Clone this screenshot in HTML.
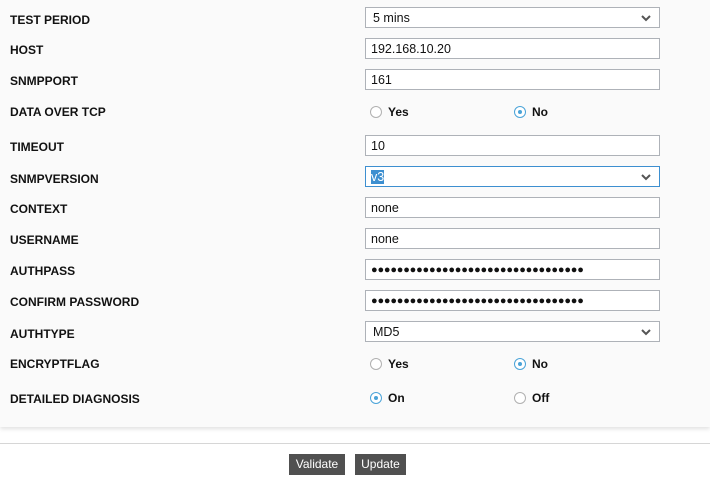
<!DOCTYPE html>
<html><head><meta charset="utf-8"><style>
*{margin:0;padding:0;box-sizing:border-box}
body{width:710px;height:478px;background:#fff;font-family:"Liberation Sans",sans-serif;position:relative;overflow:hidden}
.panel{position:absolute;left:0;top:0;width:710px;height:427px;background:#fafafa;box-shadow:0 2px 4px rgba(0,0,0,0.12)}
.l{position:absolute;left:10px;font-weight:bold;font-size:12px;color:#111;line-height:14px}
.f{position:absolute;left:365px;width:295px;height:21px;border:1px solid #aeb2b8;background:#fff;font-size:12.5px;color:#111;padding-left:5px;line-height:20px}
.f.s{padding-left:7px}
.f.focus{border-color:#3d8fd0}
.chev{position:absolute;right:7px;top:6px;width:12px;height:8px}
.r{position:absolute;font-size:12px;font-weight:bold;color:#111;line-height:14px}
.c{position:absolute;width:12px;height:12px;border:1px solid #b0b0b0;border-radius:50%;background:#fff}
.c.on{border-color:#4aa3d8}
.c.on::after{content:"";position:absolute;left:3px;top:3px;width:4px;height:4px;border-radius:50%;background:#4aa3d8}
.line{position:absolute;left:0;top:443px;width:710px;height:1px;background:#d6d6d6}
.b{position:absolute;top:454px;height:21px;background:#505050;color:#fff;font-size:12px;line-height:21px;text-align:center}
.dots{font-size:11px;letter-spacing:-0.2px}
</style></head><body>
<div class="panel"></div>

<div class="l" style="top:13px">TEST PERIOD</div>
<div class="l" style="top:43px">HOST</div>
<div class="l" style="top:74px">SNMPPORT</div>
<div class="l" style="top:105px">DATA OVER TCP</div>
<div class="l" style="top:140px">TIMEOUT</div>
<div class="l" style="top:172px">SNMPVERSION</div>
<div class="l" style="top:202px">CONTEXT</div>
<div class="l" style="top:233px">USERNAME</div>
<div class="l" style="top:264px">AUTHPASS</div>
<div class="l" style="top:295px">CONFIRM PASSWORD</div>
<div class="l" style="top:327px">AUTHTYPE</div>
<div class="l" style="top:357px">ENCRYPTFLAG</div>
<div class="l" style="top:392px">DETAILED DIAGNOSIS</div>

<div class="f s" style="top:7px">5 mins<svg class="chev" viewBox="0 0 12 8"><path d="M2 2 L6 6 L10 2" stroke="#555" stroke-width="2" fill="none"/></svg></div>
<div class="f" style="top:38px">192.168.10.20</div>
<div class="f" style="top:69px">161</div>

<div class="c" style="left:370px;top:106px"></div><div class="r" style="left:388px;top:105px">Yes</div>
<div class="c on" style="left:514px;top:106px"></div><div class="r" style="left:532px;top:105px">No</div>

<div class="f" style="top:135px">10</div>
<div class="f focus" style="top:166px"><span style="background:#3d8fd0;color:#fff">v3</span><svg class="chev" viewBox="0 0 12 8"><path d="M2 2 L6 6 L10 2" stroke="#555" stroke-width="2" fill="none"/></svg></div>
<div class="f" style="top:197px">none</div>
<div class="f" style="top:228px">none</div>
<div class="f dots" style="top:259px">●●●●●●●●●●●●●●●●●●●●●●●●●●●●●●●●●</div>
<div class="f dots" style="top:290px">●●●●●●●●●●●●●●●●●●●●●●●●●●●●●●●●●</div>
<div class="f s" style="top:321px">MD5<svg class="chev" viewBox="0 0 12 8"><path d="M2 2 L6 6 L10 2" stroke="#555" stroke-width="2" fill="none"/></svg></div>

<div class="c" style="left:370px;top:358px"></div><div class="r" style="left:388px;top:357px">Yes</div>
<div class="c on" style="left:514px;top:358px"></div><div class="r" style="left:532px;top:357px">No</div>

<div class="c on" style="left:370px;top:392px"></div><div class="r" style="left:388px;top:391px">On</div>
<div class="c" style="left:514px;top:392px"></div><div class="r" style="left:532px;top:391px">Off</div>

<div class="line"></div>
<div class="b" style="left:289px;width:56px">Validate</div>
<div class="b" style="left:355px;width:51px">Update</div>
</body></html>
